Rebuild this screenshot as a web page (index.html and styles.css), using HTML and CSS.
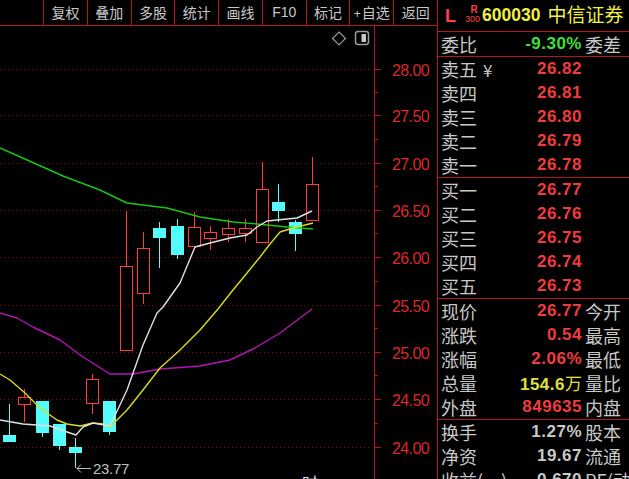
FILE: index.html
```html
<!DOCTYPE html>
<html lang="zh">
<head>
<meta charset="utf-8">
<title>600030 中信证券</title>
<link rel="stylesheet" href="styles.css">
</head>
<body>
<div class="app">
  <div class="left">
    <div class="toolbar">
      <div class="tb">复权</div>
      <div class="tb">叠加</div>
      <div class="tb">多股</div>
      <div class="tb">统计</div>
      <div class="tb">画线</div>
      <div class="tb latin">F10</div>
      <div class="tb">标记</div>
      <div class="tb"><span class="plus">+</span>自选</div>
      <div class="tb">返回</div>
    </div>
    <svg class="chart" width="437" height="453" viewBox="0 26 437 453" xmlns="http://www.w3.org/2000/svg">
      <g class="grid" stroke="#8c0a0a" stroke-width="1" stroke-dasharray="1 3">
        <line x1="0" y1="69.5" x2="370" y2="69.5"/>
        <line x1="0" y1="115.5" x2="370" y2="115.5"/>
        <line x1="0" y1="163.5" x2="370" y2="163.5"/>
        <line x1="0" y1="210.5" x2="370" y2="210.5"/>
        <line x1="0" y1="257.5" x2="370" y2="257.5"/>
        <line x1="0" y1="305.5" x2="370" y2="305.5"/>
        <line x1="0" y1="352.5" x2="370" y2="352.5"/>
        <line x1="0" y1="399.5" x2="370" y2="399.5"/>
        <line x1="0" y1="447.5" x2="370" y2="447.5"/>
      </g>
      <g stroke="#b4141e" stroke-width="1">
        <line x1="374.5" y1="26" x2="374.5" y2="479"/>
        <line x1="374" y1="69.5" x2="381" y2="69.5"/>
        <line x1="374" y1="115.5" x2="381" y2="115.5"/>
        <line x1="374" y1="163.5" x2="381" y2="163.5"/>
        <line x1="374" y1="210.5" x2="381" y2="210.5"/>
        <line x1="374" y1="257.5" x2="381" y2="257.5"/>
        <line x1="374" y1="305.5" x2="381" y2="305.5"/>
        <line x1="374" y1="352.5" x2="381" y2="352.5"/>
        <line x1="374" y1="399.5" x2="381" y2="399.5"/>
        <line x1="374" y1="447.5" x2="381" y2="447.5"/>
        <line x1="374" y1="92.5" x2="378" y2="92.5"/>
        <line x1="374" y1="139.5" x2="378" y2="139.5"/>
        <line x1="374" y1="186.5" x2="378" y2="186.5"/>
        <line x1="374" y1="233.5" x2="378" y2="233.5"/>
        <line x1="374" y1="281.5" x2="378" y2="281.5"/>
        <line x1="374" y1="328.5" x2="378" y2="328.5"/>
        <line x1="374" y1="375.5" x2="378" y2="375.5"/>
        <line x1="374" y1="423.5" x2="378" y2="423.5"/>
      </g>
      <g class="axis-label">
        <text x="392" y="75.5">28.00</text>
        <text x="392" y="121.5">27.50</text>
        <text x="392" y="169.5">27.00</text>
        <text x="392" y="216.5">26.50</text>
        <text x="392" y="263.5">26.00</text>
        <text x="392" y="311.5">25.50</text>
        <text x="392" y="358.5">25.00</text>
        <text x="392" y="405.5">24.50</text>
        <text x="392" y="453.5">24.00</text>
      </g>
      <!-- icons -->
      <path d="M339 32 L345.5 38.5 L339 45 L332.5 38.5 Z" fill="none" stroke="#9a9a9a" stroke-width="1.2"/>
      <rect x="355.5" y="31.5" width="13" height="13" rx="2.5" fill="none" stroke="#9a9a9a" stroke-width="1.5"/>
      <rect x="361.5" y="34" width="4.5" height="8" fill="#c8c8c8"/>
      <!-- candles -->
      <g class="cyan" fill="#54fcfc" stroke="#54fcfc">
        <line x1="9.5" y1="404" x2="9.5" y2="442"/><rect x="3" y="435" width="13" height="7" stroke="none"/>
        <line x1="42.5" y1="401" x2="42.5" y2="437"/><rect x="36" y="401" width="13" height="32" stroke="none"/>
        <line x1="59.5" y1="424" x2="59.5" y2="450"/><rect x="53" y="424" width="13" height="22" stroke="none"/>
        <line x1="75.5" y1="438" x2="75.5" y2="468"/><rect x="69" y="447" width="13" height="6" stroke="none"/>
        <line x1="109.5" y1="401" x2="109.5" y2="435"/><rect x="103" y="401" width="13" height="31" stroke="none"/>
        <line x1="159.5" y1="222" x2="159.5" y2="268"/><rect x="153" y="228" width="13" height="10" stroke="none"/>
        <line x1="177.5" y1="219" x2="177.5" y2="259"/><rect x="171" y="226" width="13" height="29" stroke="none"/>
        <line x1="278.5" y1="184" x2="278.5" y2="222"/><rect x="272" y="202" width="13" height="9" stroke="none"/>
        <line x1="295.5" y1="220" x2="295.5" y2="251"/><rect x="289" y="222" width="13" height="12" stroke="none"/>
      </g>
      <g class="red" fill="none" stroke="#ff3c3c" stroke-width="1">
        <line x1="24.5" y1="389" x2="24.5" y2="397"/><line x1="24.5" y1="405" x2="24.5" y2="422"/><rect x="18.5" y="397.5" width="12" height="7"/>
        <line x1="92.5" y1="374" x2="92.5" y2="379"/><line x1="92.5" y1="404" x2="92.5" y2="414"/><rect x="86.5" y="379.5" width="12" height="24"/>
        <line x1="126.5" y1="211" x2="126.5" y2="266"/><rect x="120.5" y="266.5" width="12" height="84"/>
        <line x1="143.5" y1="232" x2="143.5" y2="248"/><line x1="143.5" y1="294" x2="143.5" y2="304"/><rect x="137.5" y="248.5" width="12" height="45"/>
        <line x1="194.5" y1="212" x2="194.5" y2="227"/><rect x="188.5" y="227.5" width="12" height="19"/>
        <line x1="210.5" y1="226" x2="210.5" y2="232"/><line x1="210.5" y1="239" x2="210.5" y2="250"/><rect x="204.5" y="232.5" width="12" height="6"/>
        <line x1="228.5" y1="219" x2="228.5" y2="228"/><line x1="228.5" y1="235" x2="228.5" y2="242"/><rect x="222.5" y="228.5" width="12" height="6"/>
        <line x1="245.5" y1="219" x2="245.5" y2="228"/><line x1="245.5" y1="234" x2="245.5" y2="242"/><rect x="239.5" y="228.5" width="12" height="5"/>
        <line x1="262.5" y1="162" x2="262.5" y2="189"/><rect x="256.5" y="189.5" width="12" height="53"/>
        <line x1="312.5" y1="157" x2="312.5" y2="184"/><rect x="306.5" y="184.5" width="12" height="36"/>
      </g>
      <!-- moving averages -->
      <g fill="none" stroke-width="1.4" stroke-linejoin="round">
        <polyline stroke="#b414b4" points="0,313 17,318 33,327 60,340 83,357 110,374 133,374 160,369 200,366 230,360 255,348 280,333 300,318 312,309"/>
        <polyline stroke="#14c814" points="0,148 25,159 63,176 100,190 127,203 167,208 200,217 233,222 257,224 287,227 313,229"/>
        <polyline stroke="#dcdc14" points="0,374 10,380 25,393 40,408 57,420 67,424 80,426 93,423 103,424 110,427 127,410 143,390 160,368 180,350 200,330 218,309 233,290 247,273 260,257 270,244 280,232 293,228 313,223"/>
        <polyline stroke="#e0e0e0" points="0,420 23,424 50,426 67,432 76,435 83,427 93,423 110,426 127,390 143,345 157,313 163,307 180,283 195,247 210,243 230,238 247,235 257,227 267,221 287,219 297,218 312,211"/>
      </g>
      <!-- low marker -->
      <g stroke="#c0c0c0" stroke-width="1" fill="none">
        <line x1="77" y1="468.5" x2="91" y2="468.5"/>
        <polyline points="81,464.5 77,468.5 81,472.5"/>
      </g>
      <text class="low" x="93" y="474">23.77</text>
      <text class="tip" x="302" y="489">时</text>
    </svg>
  </div>
  <div class="panel">
    <div class="title">
      <span class="tl">L</span>
      <span class="stack"><span class="sr">R</span><span class="s3">300</span></span>
      <span class="code">600030</span>
      <span class="name">中信证券</span>
    </div>
    <div class="sec wb">
      <div class="row"><span class="lab">委比</span><span class="num green">-9.30%</span><span class="lab">委差</span></div>
    </div>
    <div class="sec">
      <div class="row"><span class="lab">卖五<span class="yen">¥</span></span><span class="num red">26.82</span><span></span></div>
      <div class="row"><span class="lab">卖四</span><span class="num red">26.81</span><span></span></div>
      <div class="row"><span class="lab">卖三</span><span class="num red">26.80</span><span></span></div>
      <div class="row"><span class="lab">卖二</span><span class="num red">26.79</span><span></span></div>
      <div class="row"><span class="lab">卖一</span><span class="num red">26.78</span><span></span></div>
    </div>
    <div class="sec">
      <div class="row"><span class="lab">买一</span><span class="num red">26.77</span><span></span></div>
      <div class="row"><span class="lab">买二</span><span class="num red">26.76</span><span></span></div>
      <div class="row"><span class="lab">买三</span><span class="num red">26.75</span><span></span></div>
      <div class="row"><span class="lab">买四</span><span class="num red">26.74</span><span></span></div>
      <div class="row"><span class="lab">买五</span><span class="num red">26.73</span><span></span></div>
    </div>
    <div class="sec">
      <div class="row"><span class="lab">现价</span><span class="num red">26.77</span><span class="lab">今开</span></div>
      <div class="row"><span class="lab">涨跌</span><span class="num red">0.54</span><span class="lab">最高</span></div>
      <div class="row"><span class="lab">涨幅</span><span class="num red">2.06%</span><span class="lab">最低</span></div>
      <div class="row"><span class="lab">总量</span><span class="num yellow">154.6<span class="wan">万</span></span><span class="lab">量比</span></div>
      <div class="row"><span class="lab">外盘</span><span class="num red">849635</span><span class="lab">内盘</span></div>
    </div>
    <div class="sec last">
      <div class="row"><span class="lab">换手</span><span class="num gray">1.27%</span><span class="lab">股本</span></div>
      <div class="row"><span class="lab">净资</span><span class="num gray">19.67</span><span class="lab">流通</span></div>
      <div class="row"><span class="lab">收益(一)</span><span class="num gray">0.670</span><span class="lab">PE(动)</span></div>
    </div>
  </div>
</div>
</body>
</html>
```

FILE: styles.css
```css
* {
  box-sizing: border-box;
  margin: 0;
  padding: 0;
}

body {
  margin: 0;
  background: #000;
  width: 629px;
  height: 479px;
  overflow: hidden;
  font-family: "Noto Sans CJK SC", "Liberation Sans", sans-serif;
}

.app {
  display: flex;
  width: 629px;
  height: 479px;
  overflow: hidden;
}

.left {
  width: 437px;
  flex: none;
  display: flex;
  flex-direction: column;
}

.toolbar {
  height: 26px;
  border-bottom: 1px solid #b4141e;
  display: flex;
  padding-left: 43px;
}

.tb {
  flex: 1;
  border-left: 1px solid #b4141e;
  color: #c8c8c8;
  font-size: 14px;
  line-height: 25px;
  text-align: center;
  white-space: nowrap;
}

.tb.latin {
  font-family: "Liberation Sans", sans-serif;
  font-size: 14px;
}

.plus {
  font-family: "Liberation Sans", sans-serif;
  font-size: 12px;
  margin-right: 1px;
}

.chart {
  display: block;
}

.axis-label text {
  font-family: "Liberation Sans", sans-serif;
  font-size: 16px;
  fill: #dc2828;
  letter-spacing: -0.6px;
}

.low {
  font-family: "Liberation Sans", sans-serif;
  font-size: 15px;
  fill: #c0c0c0;
  letter-spacing: -0.3px;
}

.tip {
  font-family: "Noto Sans CJK SC", sans-serif;
  font-size: 16px;
  fill: #dfe8ff;
}

.panel {
  width: 192px;
  flex: none;
  border-left: 1px solid #b4141e;
  overflow: hidden;
}

.title {
  height: 32px;
  border-bottom: 1px solid #b4141e;
  display: flex;
  align-items: flex-start;
  padding-left: 7px;
  white-space: nowrap;
}

.tl {
  font-family: "Liberation Sans", sans-serif;
  font-weight: bold;
  font-size: 18px;
  color: #ff4040;
  line-height: 18px;
  margin-top: 7px;
}

.stack {
  display: flex;
  flex-direction: column;
  align-items: center;
  width: 17px;
  margin-left: 8px;
  margin-top: 5px;
  font-family: "Liberation Sans", sans-serif;
  color: #ff4040;
  font-size: 9px;
  line-height: 9px;
}

.sr {
  font-weight: bold;
  font-size: 10px;
  line-height: 10px;
  padding-left: 3px;
}

.s3 {
  font-size: 9px;
  line-height: 9px;
  letter-spacing: -0.2px;
}

.code {
  font-family: "Liberation Sans", sans-serif;
  font-weight: bold;
  font-size: 17.5px;
  color: #f0f046;
  line-height: 18px;
  margin-left: 1px;
  margin-top: 6px;
}

.name {
  font-size: 19px;
  color: #f0f046;
  line-height: 22px;
  margin-left: 7px;
  margin-top: 3px;
}

.sec {
  border-bottom: 1px solid #b4141e;
}

.sec.last {
  border-bottom: none;
}

.row {
  display: grid;
  grid-template-columns: 1fr auto 44px;
  column-gap: 3px;
  height: 24px;
  line-height: 24px;
  padding-left: 3px;
  white-space: nowrap;
}

.lab {
  color: #c8c8c8;
  font-size: 18px;
  overflow: hidden;
}

.yen {
  font-size: 17px;
  margin-left: 6px;
}

.num {
  font-family: "Liberation Sans", sans-serif;
  font-weight: bold;
  font-size: 17px;
  letter-spacing: 0.5px;
  text-align: right;
}

.wan {
  font-family: "Noto Sans CJK SC", sans-serif;
  font-weight: normal;
  font-size: 17px;
  letter-spacing: 0;
}

.red {
  color: #f03c3c;
}

.green {
  color: #3ce03c;
}

.yellow {
  color: #e0e03c;
}

.gray {
  color: #c8c8c8;
}
```
